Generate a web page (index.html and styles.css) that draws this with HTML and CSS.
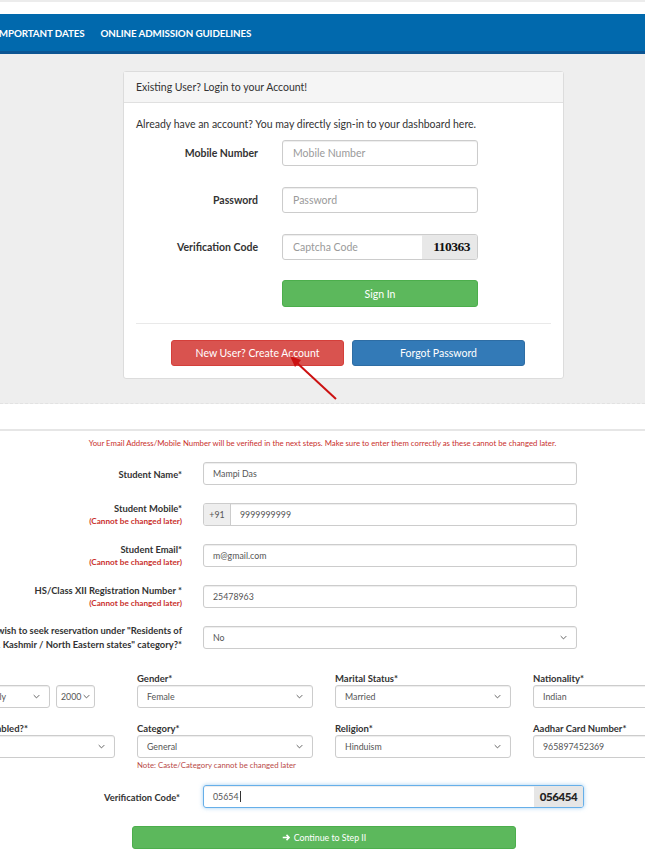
FILE: index.html
```html
<!DOCTYPE html>
<html>
<head>
<meta charset="utf-8">
<link rel="stylesheet" href="styles.css">
</head>
<body>
<div class="topbar"></div>
<nav class="nav">
  <ul class="nav-list">
    <li>IMPORTANT DATES</li>
    <li>ONLINE ADMISSION GUIDELINES</li>
  </ul>
</nav>

<section class="login-area">
  <div class="card">
    <div class="card-head">Existing User? Login to your Account!</div>
    <div class="card-body">
      <p class="intro">Already have an account? You may directly sign-in to your dashboard here.</p>
      <div class="lrow">
        <span class="llabel">Mobile Number</span>
        <div class="linput ph">Mobile Number</div>
      </div>
      <div class="lrow">
        <span class="llabel">Password</span>
        <div class="linput ph">Password</div>
      </div>
      <div class="lrow">
        <span class="llabel">Verification Code</span>
        <div class="linput group">
          <span class="ph grow">Captcha Code</span>
          <span class="captcha">110363</span>
        </div>
      </div>
      <div class="lrow">
        <span class="llabel"></span>
        <div class="btn btn-green signin">Sign In</div>
      </div>
      <div class="divider"></div>
      <div class="actions">
        <div class="btn btn-red">New User? Create Account</div>
        <div class="btn btn-blue">Forgot Password</div>
      </div>
    </div>
  </div>
</section>

<section class="reg">
  <p class="notice">Your Email Address/Mobile Number will be verified in the next steps. Make sure to enter them correctly as these cannot be changed later.</p>

  <div class="frow">
    <div class="flabel"><span>Student Name*</span></div>
    <div class="finput">Mampi Das</div>
  </div>
  <div class="frow">
    <div class="flabel"><span>Student Mobile*</span><span class="warn">(Cannot be changed later)</span></div>
    <div class="finput group"><span class="prefix">+91</span><span class="val">9999999999</span></div>
  </div>
  <div class="frow">
    <div class="flabel"><span>Student Email*</span><span class="warn">(Cannot be changed later)</span></div>
    <div class="finput">m@gmail.com</div>
  </div>
  <div class="frow">
    <div class="flabel"><span>HS/Class XII Registration Number *</span><span class="warn">(Cannot be changed later)</span></div>
    <div class="finput">25478963</div>
  </div>
  <div class="frow">
    <div class="flabel tall"><span>Do you wish to seek reservation under "Residents of</span><span>Jammu &amp; Kashmir / North Eastern states" category?*</span></div>
    <div class="finput select"><span>No</span><svg class="chev" viewBox="0 0 10 6"><path d="M1 1l4 4 4-4"/></svg></div>
  </div>

  <div class="grid">
    <div class="cell">
      <div class="glabel">Date of Birth*</div>
      <div class="dob">
        <div class="sel d"><span>01</span><svg class="chev" viewBox="0 0 10 6"><path d="M1 1l4 4 4-4"/></svg></div>
        <div class="sel m"><span>July</span><svg class="chev" viewBox="0 0 10 6"><path d="M1 1l4 4 4-4"/></svg></div>
        <div class="sel y"><span>2000</span><svg class="chev" viewBox="0 0 10 6"><path d="M1 1l4 4 4-4"/></svg></div>
      </div>
    </div>
    <div class="cell">
      <div class="glabel">Gender*</div>
      <div class="sel"><span>Female</span><svg class="chev" viewBox="0 0 10 6"><path d="M1 1l4 4 4-4"/></svg></div>
    </div>
    <div class="cell">
      <div class="glabel">Marital Status*</div>
      <div class="sel"><span>Married</span><svg class="chev" viewBox="0 0 10 6"><path d="M1 1l4 4 4-4"/></svg></div>
    </div>
    <div class="cell">
      <div class="glabel">Nationality*</div>
      <div class="sel"><span>Indian</span><svg class="chev" viewBox="0 0 10 6"><path d="M1 1l4 4 4-4"/></svg></div>
    </div>

    <div class="cell">
      <div class="glabel">Physically Disabled?*</div>
      <div class="sel"><span>No</span><svg class="chev" viewBox="0 0 10 6"><path d="M1 1l4 4 4-4"/></svg></div>
    </div>
    <div class="cell">
      <div class="glabel">Category*</div>
      <div class="sel"><span>General</span><svg class="chev" viewBox="0 0 10 6"><path d="M1 1l4 4 4-4"/></svg></div>
      <div class="note">Note: Caste/Category cannot be changed later</div>
    </div>
    <div class="cell">
      <div class="glabel">Religion*</div>
      <div class="sel"><span>Hinduism</span><svg class="chev" viewBox="0 0 10 6"><path d="M1 1l4 4 4-4"/></svg></div>
    </div>
    <div class="cell">
      <div class="glabel">Aadhar Card Number*</div>
      <div class="sel plain"><span>965897452369</span></div>
    </div>
  </div>

  <div class="frow verify">
    <div class="flabel"><span>Verification Code*</span></div>
    <div class="finput group focus"><span class="val grow">05654<span class="caret"></span></span><span class="code">056454</span></div>
  </div>

  <div class="btn btn-green continue">
    <svg class="arr" viewBox="0 0 12 12"><path d="M1 6h8M6 2.5L9.5 6 6 9.5"/></svg>
    Continue to Step II
  </div>
</section>

<svg class="pointer" viewBox="0 0 645 860" width="645" height="860">
  <line x1="336" y1="399" x2="296" y2="362"/>
  <polygon points="290,356 301,360 295,367"/>
</svg>
</body>
</html>
```

FILE: styles.css
```css
* { box-sizing: border-box; }
html, body { margin: 0; padding: 0; }
body {
  width: 645px;
  height: 860px;
  overflow: hidden;
  position: relative;
  background: #fff;
  font-family: Lato, "Open Sans", sans-serif;
  color: #333;
}

.topbar {
  height: 14px;
  background: #fff;
  border-top: 2px solid #ececec;
}

.nav {
  height: 40px;
  background: #0169ad;
  border-bottom: 3px solid #0b5593;
  box-shadow: 0 1px 0 #7fb8e4;
  overflow: hidden;
}
.nav-list {
  list-style: none;
  margin: 0 0 0 -4px;
  padding: 0;
  display: flex;
  gap: 16px;
  height: 37px;
  align-items: center;
  color: #fff;
  font-size: 9.8px;
  font-weight: 700;
  letter-spacing: -0.1px;
}

.login-area {
  background: #eeeeee;
  padding: 17px 0 24px 123px;
  border-bottom: 1px dashed #e2e2e2;
}
.card {
  width: 441px;
  background: #fff;
  border: 1px solid #dcdcdc;
  border-radius: 3px;
}
.card-head {
  height: 31px;
  display: flex;
  align-items: center;
  padding: 0 12px;
  background: #f5f5f5;
  border-bottom: 1px solid #e0e0e0;
  font-size: 10.5px;
  color: #333;
}
.card-body {
  padding: 13px 12px 12px;
}
.intro {
  margin: 0 0 8px;
  font-size: 10.5px;
  line-height: 16px;
  color: #333;
}
.lrow {
  display: grid;
  grid-template-columns: 122px 196px;
  column-gap: 24px;
  align-items: center;
  margin-bottom: 21px;
}
.lrow:nth-child(5) { margin-bottom: 0; margin-top: -1px; }
.llabel {
  text-align: right;
  font-weight: 700;
  font-size: 10.5px;
  color: #333;
}
.linput {
  height: 26px;
  border: 1px solid #ccc;
  border-radius: 3px;
  box-shadow: inset 0 1px 1px rgba(0,0,0,.075);
  display: flex;
  align-items: center;
  padding: 0 10px;
  font-size: 10.5px;
}
.ph { color: #9a9a9a; }
.linput.group { padding: 0 0 0 10px; overflow: hidden; }
.grow { flex: 1; }
.captcha {
  width: 55px;
  height: 100%;
  background: #e8e8e8;
  display: flex;
  align-items: center;
  justify-content: flex-end;
  padding-right: 7px;
  font-family: "Liberation Serif", serif;
  font-weight: 700;
  font-size: 13.5px;
  color: #111;
  letter-spacing: -0.5px;
}

.btn {
  display: flex;
  align-items: center;
  justify-content: center;
  color: #fff;
  border-radius: 3px;
  font-size: 10.5px;
}
.btn-green { background: #5cb85c; border: 1px solid #4cae4c; }
.btn-red { background: #d9534f; border: 1px solid #d43f3a; }
.btn-blue { background: #337ab7; border: 1px solid #2e6da4; }
.signin { height: 27px; }

.divider {
  height: 1px;
  background: #e9e9e9;
  margin: 16px 0 16px;
}
.actions {
  display: flex;
  gap: 8px;
  padding-left: 35px;
}
.actions .btn { width: 173px; height: 26px; }

/* Registration form */
.reg {
  margin-top: 25px;
  border-top: 2px solid #e6e6e6;
  padding-top: 6px;
}
.notice {
  margin: 0 0 13px;
  text-align: center;
  font-size: 7.8px;
  line-height: 12px;
  color: #c9302c;
}
.frow {
  display: grid;
  grid-template-columns: 182px 374px;
  grid-template-rows: 23px;
  column-gap: 21px;
  margin-bottom: 18px;
}
.flabel {
  height: 23px;
  padding-top: 2px;
  font-weight: 700;
  font-size: 9.4px;
  line-height: 12px;
  color: #333;
  white-space: nowrap;
  display: flex;
  flex-direction: column;
  justify-content: center;
  align-items: flex-end;
}
.flabel.tall { line-height: 14px; padding-top: 0; }
.warn {
  color: #c9302c;
  font-size: 8.2px;
  line-height: 13px;
}
.finput {
  height: 23px;
  border: 1px solid #ccc;
  border-radius: 3px;
  box-shadow: inset 0 1px 1px rgba(0,0,0,.075);
  display: flex;
  align-items: center;
  padding: 0 9px;
  font-size: 8.8px;
  color: #555;
}
.finput.group { padding: 0; overflow: hidden; }
.prefix {
  width: 27px;
  height: 100%;
  background: #eee;
  border-right: 1px solid #ccc;
  display: flex;
  align-items: center;
  justify-content: center;
}
.val { padding-left: 9px; display: flex; align-items: center; }
.finput.select { justify-content: space-between; }

.chev {
  width: 7px;
  height: 5px;
  flex: none;
  fill: none;
  stroke: #555;
  stroke-width: 1.3;
}

.grid {
  display: grid;
  grid-template-columns: repeat(4, 176px);
  column-gap: 22px;
  row-gap: 14px;
  margin-left: -61px;
  margin-top: 23px;
  align-items: start;
}
.glabel {
  font-weight: 700;
  font-size: 9.5px;
  line-height: 13px;
  color: #333;
  white-space: nowrap;
}
.sel {
  height: 23px;
  border: 1px solid #ccc;
  border-radius: 3px;
  box-shadow: inset 0 1px 1px rgba(0,0,0,.075);
  display: flex;
  align-items: center;
  justify-content: space-between;
  padding: 0 9px;
  font-size: 8.8px;
  color: #555;
  background: #fff;
}
.sel.plain { justify-content: flex-start; }
.dob { display: flex; gap: 6px; }
.dob .d { width: 36px; }
.dob .m { width: 69px; }
.dob .y { width: 39px; padding: 0 4px; }
.note {
  margin-top: 2px;
  font-size: 7.8px;
  color: #b94a48;
  line-height: 10px;
}

.verify {
  grid-template-columns: 182px 381px;
  margin-top: 15px;
  margin-bottom: 18px;
}
.verify .flabel { padding-right: 2px; }
.finput.focus {
  border-color: #66afe9;
  box-shadow: inset 0 1px 1px rgba(0,0,0,.075), 0 0 4px rgba(102,175,233,.6);
}
.caret {
  display: inline-block;
  width: 1px;
  height: 11px;
  background: #333;
  margin-left: 1px;
}
.code {
  width: 49px;
  height: 100%;
  background: #e6e6e6;
  display: flex;
  align-items: center;
  justify-content: center;
  font-weight: 900;
  font-size: 11.5px;
  color: #222;
  letter-spacing: -0.4px;
}

.continue {
  margin-left: 132px;
  width: 384px;
  height: 23px;
  font-size: 8.8px;
  gap: 3px;
}
.arr {
  width: 9px;
  height: 9px;
  fill: none;
  stroke: #fff;
  stroke-width: 2;
}

.pointer {
  position: absolute;
  left: 0;
  top: 0;
  pointer-events: none;
}
.pointer line { stroke: #cc1111; stroke-width: 2; }
.pointer polygon { fill: #cc1111; }
```
